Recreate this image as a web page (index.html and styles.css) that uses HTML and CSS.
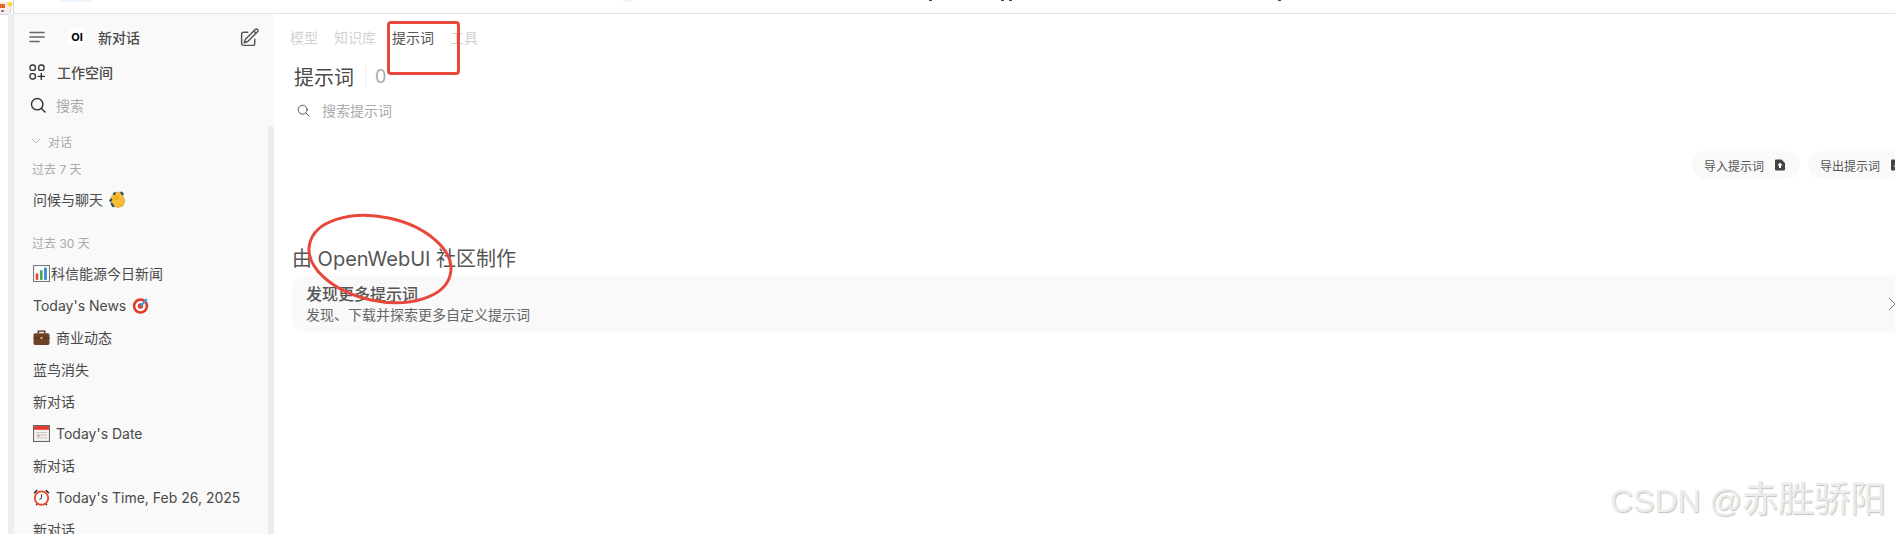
FILE: index.html
```html
<!DOCTYPE html>
<html lang="zh-CN">

<head>
	<meta charset="UTF-8">
	<meta name="viewport" content="width=device-width, initial-scale=1.0">
	<title>提示词</title>
	<link rel="stylesheet" href="styles.css">
</head>

<body>
	<div class="topbar">
		<div class="favicon">
			<svg viewBox="0 0 14 14" width="14" height="14">
				<circle cx="3" cy="7" r="8" fill="#fbeee8" stroke="#e0d0c8"/>
				<rect x="0" y="2" width="5" height="4" fill="#e8622c"/>
				<rect x="1" y="8" width="3" height="2" fill="#888"/>
				<circle cx="10" cy="2" r="2.5" fill="#ffd83a"/>
			</svg>
		</div>
		<i class="tint tint-a"></i>
		<i class="tint tint-b"></i>
		<i class="fleck fleck-a"></i>
		<i class="fleck fleck-b"></i>
		<i class="fleck fleck-c"></i>
		<i class="fleck fleck-d"></i>
	</div>

	<div class="app">
		<div class="rail"></div>

		<aside class="sidebar">
			<div class="side-row new-chat">
				<svg class="icon-menu" viewBox="0 0 16 12" width="16" height="12" fill="none" stroke="#666" stroke-width="1.6" stroke-linecap="round">
					<path d="M1 1.500h14M1 6h14M1 10.500h9"/>
				</svg>
				<span class="logo">OI</span>
				<span class="new-chat-label">新对话</span>
				<svg class="icon-pencil" viewBox="0 0 24 24" width="21" height="21" fill="none" stroke="#555" stroke-width="1.7" stroke-linecap="round" stroke-linejoin="round">
					<path d="M16.862 4.487l1.687-1.688a1.875 1.875 0 112.652 2.652L10.582 16.070a4.500 4.500 0 01-1.897 1.130L6 18l.8-2.685a4.500 4.500 0 011.130-1.897l8.932-8.931zm0 0L19.500 7.125M18 14v4.750A2.250 2.250 0 0115.750 21H5.250A2.250 2.250 0 013 18.750V8.250A2.250 2.250 0 015.250 6H10"/>
				</svg>
			</div>
			<div class="side-row workspace">
				<svg viewBox="0 0 16 16" width="16" height="16" fill="none" stroke="#333" stroke-width="1.4" stroke-linecap="round">
					<rect x="1" y="1" width="5.4" height="5.4" rx="2.2"/>
					<rect x="9.6" y="1" width="5.4" height="5.4" rx="2.2"/>
					<rect x="1" y="9.6" width="5.4" height="5.4" rx="2.2"/>
					<path d="M12.3 9.4v6M9.3 12.4h6"/>
				</svg>
				<span>工作空间</span>
			</div>
			<div class="side-row side-search">
				<svg viewBox="0 0 16 16" width="16" height="16" fill="none" stroke="#333" stroke-width="1.4" stroke-linecap="round">
					<circle cx="7.2" cy="7.2" r="5.7"/>
					<path d="M11.4 11.4l3.6 3.6"/>
				</svg>
				<span>搜索</span>
			</div>
			<div class="folder">
				<svg viewBox="0 0 10 6" width="10" height="6" fill="none" stroke="#bbb" stroke-width="1">
					<path d="M1 1l4 4 4-4"/>
				</svg>
				<span>对话</span>
			</div>
			<div class="date-label first">过去 7 天</div>
			<div class="chat"><span>问候与聊天</span>
				<svg class="emoji" viewBox="0 0 16 16">
					<path d="M1.500 6.500L5.500 1l3 .5L9.500 .800 12.500 3l2.500 6.500-2 4.500-4.500 1.500-4-1L2 11z" fill="#f6bd35" stroke="#c98d1c" stroke-width=".5"/>
					<path d="M2.500 7.500L.800 10M6 1.500L4.200 3.500M11 1l2.500 2.500M2 11.500l2.500 3.500" stroke="#1d4f6b" stroke-width="2" fill="none"/>
					<path d="M6.500 5l-2 3M9 4.500l-2 4" stroke="#c98d1c" stroke-width=".7" fill="none"/>
				</svg>
			</div>
			<div class="date-label second">过去 30 天</div>
			<div class="chat tight">
				<svg class="emoji" viewBox="0 0 16 16">
					<rect x=".5" y=".5" width="15" height="15" fill="#fff" stroke="#777"/>
					<rect x="2.5" y="8" width="2.5" height="6" fill="#e0483c"/>
					<rect x="6.5" y="5" width="2.5" height="9" fill="#3dab52"/>
					<rect x="10.5" y="2.5" width="2.5" height="11.5" fill="#2f86d8"/>
				</svg>
				<span>科信能源今日新闻</span>
			</div>
			<div class="chat"><span>Today's News</span>
				<svg class="emoji" viewBox="0 0 16 16">
					<circle cx="8" cy="8.5" r="7.3" fill="#e5392c"/>
					<circle cx="8" cy="8.5" r="4.8" fill="#fff"/>
					<circle cx="8" cy="8.5" r="2.6" fill="#e5392c"/>
					<path d="M8 8.5l6-6.5" stroke="#2f9be0" stroke-width="2"/>
				</svg>
			</div>
			<div class="chat">
				<svg class="emoji" viewBox="0 0 16 16">
					<path d="M5 4V2h6v2" fill="none" stroke="#4a2c1c" stroke-width="1.4"/>
					<rect x=".5" y="4" width="15" height="11" rx="1.5" fill="#6e4026"/>
					<rect x=".5" y="8" width="15" height="1" fill="#4a2c1c"/>
					<rect x="7" y="7.5" width="2" height="2" fill="#e0b050"/>
				</svg>
				<span>商业动态</span>
			</div>
			<div class="chat"><span>蓝鸟消失</span></div>
			<div class="chat"><span>新对话</span></div>
			<div class="chat">
				<svg class="emoji" viewBox="0 0 16 16">
					<rect x=".5" y=".5" width="15" height="15" fill="#f4f2ee" stroke="#666"/>
					<rect x="1" y="1" width="14" height="3.5" fill="#e5392c"/>
					<path d="M3 7h10M3 9.5h10M3 12h10" stroke="#c9c9c9"/>
					<rect x="4" y="9" width="2" height="2" fill="#ee9a90"/>
				</svg>
				<span>Today's Date</span>
			</div>
			<div class="chat"><span>新对话</span></div>
			<div class="chat">
				<svg class="emoji" viewBox="0 0 16 16">
					<path d="M1 4l3-3M15 4l-3-3M3 15l1.5-2M13 15l-1.500-2" stroke="#333" stroke-width="1.500"/>
					<circle cx="8" cy="8.500" r="6.300" fill="#fff" stroke="#e5482c" stroke-width="1.700"/>
					<path d="M8 5v3.500l-2 1.500" stroke="#444" stroke-width="1" fill="none"/>
				</svg>
				<span>Today's Time, Feb 26, 2025</span>
			</div>
			<div class="chat"><span>新对话</span></div>
			<div class="side-scroll"></div>
		</aside>

		<main class="main">
			<div class="content">
				<nav class="tabs">
					<span>模型</span>
					<span>知识库</span>
					<span class="active">提示词</span>
					<span>工具</span>
				</nav>
				<div class="title-row">
					<h1>提示词</h1>
					<i class="title-sep"></i>
					<span class="count">0</span>
				</div>
				<div class="search">
					<svg viewBox="0 0 16 16" width="13" height="13" fill="none" stroke="#555" stroke-width="1.200" stroke-linecap="round">
						<circle cx="7" cy="7" r="5.500"/>
						<path d="M11 11l4 4"/>
					</svg>
					<span>搜索提示词</span>
				</div>
				<div class="actions">
					<button class="pill">导入提示词
						<svg viewBox="0 0 12 12" width="12" height="12">
							<path d="M2 .500h5.500L11 4v6.500a1 1 0 01-1 1H2a1 1 0 01-1-1v-9a1 1 0 011-1z" fill="#444"/>
							<path d="M6 3.500L8.500 6.500H7V9H5V6.500H3.500z" fill="#fff"/>
						</svg>
					</button>
					<button class="pill">导出提示词
						<svg viewBox="0 0 12 12" width="12" height="12">
							<path d="M2 .500h5.500L11 4v6.500a1 1 0 01-1 1H2a1 1 0 01-1-1v-9a1 1 0 011-1z" fill="#444"/>
							<path d="M6 9.500L3.500 6.500H5V4h2v2.500h1.500z" fill="#fff"/>
						</svg>
					</button>
				</div>
				<h2 class="made-by">由 OpenWebUI 社区制作</h2>
				<div class="discover">
					<div>
						<div class="discover-title">发现更多提示词</div>
						<div class="discover-sub">发现、下载并探索更多自定义提示词</div>
					</div>
					<svg viewBox="0 0 10 14" width="10" height="14" fill="none" stroke="#777" stroke-width="1">
						<path d="M2 1l6 6-6 6"/>
					</svg>
				</div>
			</div>
		</main>
	</div>

	<!-- red marks drawn on the screenshot -->
	<div class="mark-box"></div>
	<svg class="mark-ring" viewBox="0 0 160 100" width="160" height="100" fill="none" stroke="#e8483c" stroke-width="3">
		<ellipse cx="80" cy="50" rx="72" ry="42" transform="rotate(12 80 50)"/>
	</svg>
	<div class="watermark">CSDN @<span>赤胜骄阳</span></div>
</body>

</html>
```

FILE: styles.css
```css
html, body {
	margin: 0;
	height: 100%;
	overflow: hidden;
}

body {
	position: relative;
	font-family: 'Inter', 'Noto Sans CJK SC', sans-serif;
	color: #4a4a4a;
	background: #fff;
}

.topbar {
	display: flex;
	height: 13px;
	border-bottom: 1px solid #e2e2e2;
}

.favicon {
	width: 13px;
	height: 14px;
	flex-shrink: 0;
	border-right: 1px solid #c5d6ea;
	border-bottom: 1px solid #c5d6ea;
	background: #fff;
	overflow: hidden;
}

/* bits of the clipped browser bar above */
.tint,
.fleck {
	display: block;
	flex-shrink: 0;
}

.tint {
	height: 2px;
	background: #eef4fc;
}

.tint-a {
	width: 30px;
	margin-left: 47px;
}

.tint-b {
	width: 10px;
	margin-left: 532px;
}

.fleck {
	width: 3px;
	height: 1px;
	background: #445;
}

.fleck-a {
	margin-left: 296px;
}

.fleck-b {
	margin-left: 69px;
}

.fleck-c {
	margin-left: 5px;
}

.fleck-d {
	margin-left: 266px;
}

.app {
	display: flex;
	height: 520px;
}

.rail {
	width: 6px;
	margin-left: 8px;
	background: #eceef3;
}

/* sidebar */
.sidebar {
	position: relative;
	width: 260px;
	flex-shrink: 0;
	padding-top: 7px;
	background: #f9f9f9;
	overflow: hidden;
	box-sizing: border-box;
}

.side-row {
	display: flex;
	align-items: center;
	height: 32px;
	font-size: 14px;
}

.new-chat {
	padding-left: 15px;
}

.logo {
	width: 20px;
	height: 20px;
	margin-left: 22px;
	border-radius: 50%;
	background: #fff;
	color: #000;
	font-size: 11px;
	font-weight: 700;
	line-height: 20px;
	text-align: center;
}

.new-chat-label {
	margin-left: 11px;
	font-weight: 500;
}

.icon-pencil {
	margin-left: auto;
	margin-right: 14px;
}

.workspace {
	margin-top: 3px;
	padding-left: 15px;
	gap: 12px;
	font-weight: 500;
}

.side-search {
	margin-top: 1px;
	padding-left: 16px;
	gap: 10px;
	color: #aaa;
}

.folder {
	display: flex;
	align-items: center;
	gap: 7px;
	height: 24px;
	margin-top: 8px;
	padding-left: 17px;
	font-size: 12px;
	color: #aaa;
}

.date-label {
	height: 24px;
	padding-left: 18px;
	font-size: 12px;
	line-height: 24px;
	color: #aaa;
}

.date-label.first {
	margin-top: 5px;
}

.date-label.second {
	margin-top: 17px;
	margin-bottom: 1px;
}

.chat {
	display: flex;
	align-items: center;
	gap: 6px;
	height: 32px;
	padding-left: 19px;
	font-size: 14px;
	white-space: nowrap;
}

.date-label.first + .chat {
	margin-top: 1px;
}

.chat.tight {
	gap: 1px;
}

.emoji {
	width: 17px;
	height: 17px;
	flex-shrink: 0;
}

.side-scroll {
	position: absolute;
	top: 112px;
	right: 0;
	bottom: 0;
	width: 6px;
	border-radius: 3px 3px 0 0;
	background: #ececec;
}

/* main */
.main {
	flex: 1;
	min-width: 0;
	overflow: hidden;
	padding-left: 16px;
}

.content {
	width: 1626px;
}

.tabs {
	display: flex;
	gap: 16px;
	height: 20px;
	margin-top: 14px;
	font-size: 14px;
	line-height: 20px;
	color: #d2d2d2;
}

.tabs .active {
	color: #555;
}

.title-row {
	display: flex;
	align-items: center;
	height: 28px;
	margin-top: 14px;
	padding-left: 4px;
}

.title-row h1 {
	margin: 0;
	font-size: 20px;
	font-weight: 400;
}

.title-sep {
	width: 1px;
	height: 24px;
	margin: 0 9px 0 11px;
	background: #f0f0f0;
}

.count {
	font-size: 18px;
	color: #aaa;
}

.search {
	display: flex;
	align-items: center;
	gap: 12px;
	height: 20px;
	margin-top: 10px;
	padding-left: 7px;
	font-size: 14px;
	color: #aaa;
}

.actions {
	display: flex;
	justify-content: flex-end;
	gap: 8px;
	margin-top: 31px;
}

.pill {
	display: flex;
	align-items: center;
	gap: 10px;
	width: 108px;
	height: 28px;
	padding: 0 12px;
	border: none;
	border-radius: 14px;
	background: #f9f9f9;
	font-family: inherit;
	font-size: 12px;
	color: #555;
	box-sizing: border-box;
}

.made-by {
	margin: 64px 0 1px;
	padding-left: 2px;
	height: 32px;
	font-size: 20px;
	font-weight: 400;
	line-height: 32px;
	color: #555;
}

.discover {
	display: flex;
	align-items: center;
	justify-content: space-between;
	height: 56px;
	margin-left: 2px;
	padding: 0 19px 0 14px;
	border-radius: 12px;
	background: #f9f9f9;
	box-sizing: border-box;
}

.discover-title {
	font-size: 16px;
	font-weight: 500;
	line-height: 22px;
	color: #555;
}

.discover-sub {
	font-size: 14px;
	line-height: 20px;
	color: #666;
}

/* things lying over the screenshot */
.mark-box {
	position: absolute;
	left: 387px;
	top: 21px;
	width: 73px;
	height: 54px;
	border: 3px solid #e8483c;
	border-radius: 4px;
	box-sizing: border-box;
}

.mark-ring {
	position: absolute;
	left: 300px;
	top: 209px;
}

.watermark {
	position: absolute;
	left: 1610px;
	top: 480px;
	font-family: 'Liberation Sans', 'Noto Sans CJK SC', sans-serif;
	font-size: 32px;
	line-height: 40px;
	white-space: nowrap;
	color: #ececec;
	text-shadow: 1px 1px 1px #c4c4c4;
}

.watermark span {
	font-size: 36px;
}
```
